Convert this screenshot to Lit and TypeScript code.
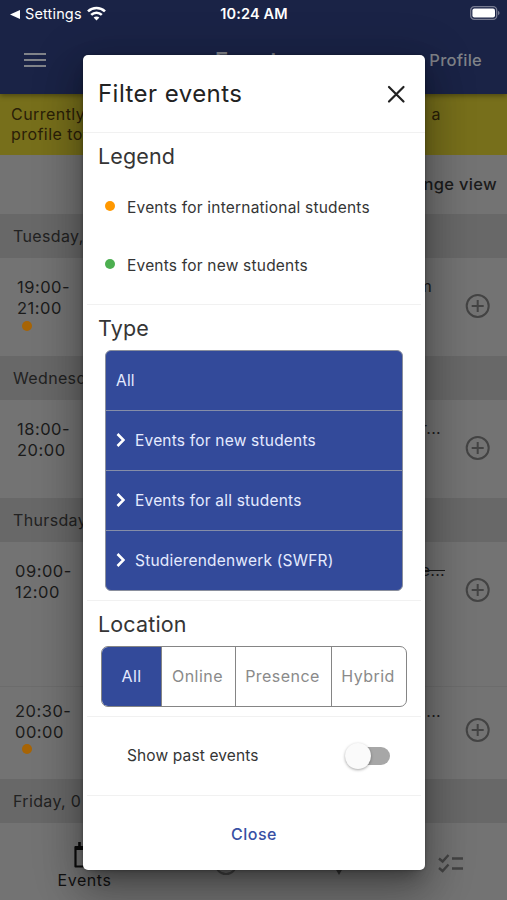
import { LitElement, html, css, svg, nothing } from "lit";
import { customElement } from "lit/decorators.js";
import { classMap } from "lit/directives/class-map.js";

interface EventRow {
  from: string;
  to: string;
  dot?: boolean;
  title: string;
  struck?: boolean;
  size: string;
}
interface Day {
  label: string;
  rows: EventRow[];
}

const DAYS: Day[] = [
  { label: "Tuesday,", rows: [{ from: "19:00-", to: "21:00", dot: true, title: "m", size: "first" }] },
  { label: "Wednesday", rows: [{ from: "18:00-", to: "20:00", title: "r...", size: "plain" }] },
  {
    label: "Thursday,",
    rows: [
      { from: "09:00-", to: "12:00", title: "e...", struck: true, size: "tall" },
      { from: "20:30-", to: "00:00", dot: true, title: "...", size: "last" },
    ],
  },
  { label: "Friday, 0", rows: [] },
];

const TYPES = ["Events for new students", "Events for all students", "Studierendenwerk (SWFR)"];
const LOCATIONS = ["All", "Online", "Presence", "Hybrid"];

const plusIcon = svg`<svg class="plus" viewBox="0 0 26 26" fill="none" stroke="#434343" stroke-width="2">
  <circle cx="12.700" cy="13" r="11"/><path d="M12.700 7v12M6.700 13h12"/></svg>`;

@customElement("app-root")
export class AppRoot extends LitElement {
  static styles = css`
    :host {
      display: block;
      position: relative;
      width: 507px;
      height: 900px;
      overflow: hidden;
      background: #737373;
      font-family: Inter, "Liberation Sans", sans-serif;
      font-size: 16px;
      line-height: 20px;
      letter-spacing: 0.3px;
      color: #1b1b1b;
    }
    * { box-sizing: border-box; }
    svg { display: block; flex: none; }
    .page { display: flex; flex-direction: column; height: 900px; }
    .top { background: #1a2346; height: 94px; flex: none; box-shadow: 0 2px 5px rgba(0, 0, 0, 0.35); z-index: 1; }
    .status {
      display: grid;
      grid-template-columns: 1fr auto 1fr;
      align-items: center;
      height: 28px;
      padding: 0 7px 0 10px;
      color: #fff;
      font-size: 14.5px;
    }
    .back { display: flex; align-items: center; gap: 5px; letter-spacing: 0.15px; }
    .wifi { margin-top: -2px; }
    .clock { font-weight: 600; font-size: 14.5px; letter-spacing: 0.15px; margin-left: -2px; }
    .battery { justify-self: end; margin-top: -2px; }
    .bar {
      display: grid;
      grid-template-columns: 1fr auto 1fr;
      align-items: center;
      height: 64px;
      padding: 0 25px 0 24px;
      color: #808389;
    }
    .bar svg { margin-top: -1px; }
    .bar .name { font-size: 22px; font-weight: 600; letter-spacing: 0.7px; margin-top: -1px; }
    .bar .profile { justify-self: end; font-weight: 500; font-size: 16.5px; letter-spacing: 0.25px; }
    .banner {
      display: flex;
      justify-content: space-between;
      flex: none;
      height: 61px;
      padding: 9.5px 66px 0 11px;
      background: #776f1b;
      color: #2a2008;
      line-height: 20.5px;
      letter-spacing: 0.45px;
    }
    .view {
      flex: none;
      height: 59px;
      padding: 19px 10px 0 0;
      text-align: right;
      font-size: 16.5px;
      font-weight: 500;
    }
    .day {
      flex: none;
      height: 44px;
      padding: 12px 13px;
      background: #686868;
      color: #222;
      letter-spacing: 0.35px;
    }
    .row {
      display: flex;
      flex: none;
      justify-content: space-between;
      padding: 18px 16px 0 17px;
    }
    .row.first, .row.plain { height: 98px; }
    .row.tall { height: 144px; padding-left: 15px; }
    .row.last { height: 93px; padding-left: 15px; padding-top: 14px; border-top: 1px solid #6c6c6c; }
    .time { width: 60px; line-height: 21px; font-size: 16.5px; letter-spacing: 0.5px; padding-top: 1px; }
    .dot { width: 10px; height: 10px; border-radius: 50%; background: #ff9800; }
    .time .dot { background: #a76405; margin: 2px 0 0 5px; }
    .row.last .dot { margin: 1px 0 0 7px; }
    .row.last .time { padding-top: 0; }
    .right { display: flex; }
    .title { text-align: right; margin-right: 24px; height: 21px; }
    .first .title { margin-right: 33px; }
    .tall .title { margin-right: 20px; }
    .struck { text-decoration: line-through; }
    .plus { width: 26px; height: 26px; margin-top: 17px; }
    .row.last .plus { margin-top: 16px; }
    .nav {
      display: grid;
      grid-template-columns: 169px 113px 113px 112px;
      height: 77px;
      flex: none;
      padding-top: 19px;
      justify-items: center;
      font-size: 16px;
      color: #111;
    }
    .tab { display: flex; flex-direction: column; align-items: center; }
    .tab span { line-height: 19px; margin-top: 2px; letter-spacing: 0.55px; }
    .tab .check { margin-top: 11px; }

    .dialog {
      position: absolute;
      left: 83px;
      top: 55px;
      width: 342px;
      height: 815px;
      display: flex;
      flex-direction: column;
      z-index: 2;
      border-radius: 5px;
      background: #fff;
      color: #353535;
      font-size: 15.5px;
      letter-spacing: 0.2px;
      box-shadow: 0 11px 15px -7px rgba(0, 0, 0, 0.3), 0 24px 38px 3px rgba(0, 0, 0, 0.2),
        0 9px 46px 8px rgba(0, 0, 0, 0.18), 0 0 3px rgba(0, 0, 0, 0.3);
    }
    .head {
      display: flex;
      justify-content: space-between;
      align-items: center;
      height: 78px;
      padding: 0 19.5px 0 15px;
      border-bottom: 1px solid #f1f1f1;
      font-size: 24px;
      line-height: 28px;
      letter-spacing: 0.45px;
      color: #222;
    }
    .section { margin: 0 4px; padding: 0 11px; border-bottom: 1px solid #f1f1f1; }
    h2 { margin: 0; font-size: 21.5px; line-height: 26px; font-weight: 400; letter-spacing: 0.15px; }
    .legend { height: 172px; padding-top: 10px; }
    .types { height: 296px; padding-top: 10px; }
    .locations { height: 116px; padding-top: 10px; }
    .past { display: flex; align-items: center; justify-content: space-between; height: 79px; padding: 0 31px 0 40px; }
    .past span { margin-top: -1px; letter-spacing: 0.13px; }
    .key { display: flex; align-items: center; gap: 12px; height: 58px; padding-left: 7px; }
    .legend h2 + .key { margin-top: 9px; }
    .key span { padding-top: 2px; }
    .key .dot { margin-top: -3px; }
    .key .green { background: #4caf50; }
    .tree {
      width: 298px;
      height: 241px;
      margin: 9px 0 0 7px;
      border: 1px solid #8a8f9d;
      border-radius: 6px;
      background: #334a9a;
      color: #e5ebff;
      overflow: hidden;
    }
    .node { display: flex; align-items: center; gap: 10px; height: 60px; padding: 0 0 0 10px; border-top: 1px solid #858da8; }
    .node svg { margin-top: -1px; }
    .node:first-child { border-top: 0; height: 59px; }
    .group {
      display: grid;
      grid-template-columns: 59px 74px 96px 1fr;
      width: 306px;
      height: 61px;
      margin: 9px 0 0 3px;
      border: 1px solid #858585;
      border-radius: 7px;
      overflow: hidden;
      color: #8a8a8a;
      font-size: 16px;
      letter-spacing: 0.45px;
    }
    .opt { display: flex; align-items: center; justify-content: center; border-left: 1px solid #858585; padding: 0 2px 2px 0; }
    .opt.on { background: #334a9a; color: #e5ebff; border-left: 0; padding-right: 0; }
    .toggle { position: relative; width: 45px; height: 28px; display: flex; align-items: center; justify-content: flex-end; }
    .track { width: 38px; height: 18px; border-radius: 9px; background: #a7a7a7; }
    .thumb {
      position: absolute;
      left: 0;
      top: 1px;
      width: 26px;
      height: 26px;
      border-radius: 50%;
      background: #fafafa;
      box-shadow: 0 1px 3px rgba(0, 0, 0, 0.35);
    }
    .close {
      display: flex;
      flex: 1;
      align-items: center;
      justify-content: center;
      padding-top: 1px;
      color: #3850a4;
      font-size: 16px;
      font-weight: 500;
      letter-spacing: 0.5px;
    }
  `;

  private renderRow(r: EventRow) {
    return html`<div class="row ${r.size}">
      <div class="time">${r.from}<br />${r.to}${r.dot ? html`<div class="dot"></div>` : nothing}</div>
      <div class="right">
        <div class=${classMap({ title: true, struck: !!r.struck })}>${r.title}</div>
        ${plusIcon}
      </div>
    </div>`;
  }

  render() {
    return html`
      <div class="page">
        <header class="top">
          <div class="status">
            <div class="back">
              <svg width="10" height="9" viewBox="0 0 10 9"><path d="M0 4.5 10 0v9z" fill="#fff" /></svg>
              <span>Settings</span>
              <svg class="wifi" width="19" height="15" viewBox="0 0 19 15" fill="none" stroke="#fff" stroke-width="2.6">
                <path d="M1 5.4C5.8.9 13.2.9 18 5.4M4.2 8.9c3-2.9 7.6-2.9 10.6 0" />
                <path d="M9.5 14.4 6.6 11.5c1.6-1.5 4.2-1.5 5.8 0z" fill="#fff" stroke="none" />
              </svg>
            </div>
            <span class="clock">10:24 AM</span>
            <svg class="battery" width="30" height="14" viewBox="0 0 30 14">
              <rect x=".7" y=".7" width="26" height="12.6" rx="3.6" fill="none" stroke="#777b91" stroke-width="1.3" />
              <rect x="2.4" y="2.4" width="22.6" height="9.2" rx="2" fill="#fff" />
              <path d="M28 4.7q1.6.7 1.6 2.3T28 9.3z" fill="#777b91" />
            </svg>
          </div>
          <div class="bar">
            <svg width="22" height="16" viewBox="0 0 22 16" stroke="#808389" stroke-width="2"><path d="M0 2h22M0 8h22M0 14h22" /></svg>
            <span class="name">Events</span>
            <span class="profile">Profile</span>
          </div>
        </header>
        <div class="banner"><span>Currently<br />profile to</span><span>a</span></div>
        <div class="view">Change view</div>
        ${DAYS.map((d) => html`<div class="day">${d.label}</div>${d.rows.map((r) => this.renderRow(r))}`)}
        <nav class="nav">
          <div class="tab">
            <svg width="24" height="27" viewBox="0 0 24 27" fill="none" stroke="#0c0c0c" stroke-width="2.2">
              <path d="M2.5 5h19v19.5h-19z" stroke-linejoin="round" /><path d="M2 6h20" stroke-width="4" /><path d="M6.5 0v5M17.5 0v5" stroke-width="2.6" />
            </svg>
            <span>Events</span>
          </div>
          <div class="tab">
            <svg width="26" height="36" viewBox="0 0 26 36" fill="none" stroke="#474747" stroke-width="2"><circle cx="13" cy="21.5" r="10.5" /></svg>
          </div>
          <div class="tab">
            <svg width="20" height="36" viewBox="0 0 20 36"><path d="M2 19h16l-8 14z" fill="#373737" /></svg>
          </div>
          <div class="tab">
            <svg class="check" width="26" height="20" viewBox="0 0 26 20" fill="none" stroke="#434343" stroke-width="2.4">
              <path d="m1 5.5 3.600 3L10.5 2M1 15l3.600 3 5.900-6.500M14 5.500h11M14 15.500h11" />
            </svg>
          </div>
        </nav>
      </div>

      <section class="dialog" role="dialog">
        <div class="head">
          <span>Filter events</span>
          <svg width="20" height="20" viewBox="0 0 20 20" stroke="#222" stroke-width="2.2" stroke-linecap="round"><path d="m3 3 14.5 14.5M17.5 3 3 17.5" /></svg>
        </div>
        <div class="section legend">
          <h2>Legend</h2>
          <div class="key"><i class="dot"></i><span>Events for international students</span></div>
          <div class="key"><i class="dot green"></i><span>Events for new students</span></div>
        </div>
        <div class="section types">
          <h2>Type</h2>
          <div class="tree">
            <div class="node">All</div>
            ${TYPES.map(
              (t) => html`<div class="node">
                <svg width="9" height="14" viewBox="0 0 9 14" fill="none" stroke="#fff" stroke-width="2.6"><path d="m1.5 1 6 6-6 6" /></svg>
                <span>${t}</span>
              </div>`
            )}
          </div>
        </div>
        <div class="section locations">
          <h2>Location</h2>
          <div class="group">
            ${LOCATIONS.map((l, i) => html`<div class=${classMap({ opt: true, on: i === 0 })}>${l}</div>`)}
          </div>
        </div>
        <div class="section past">
          <span>Show past events</span>
          <div class="toggle"><div class="track"></div><div class="thumb"></div></div>
        </div>
        <div class="close">Close</div>
      </section>
    `;
  }
}
